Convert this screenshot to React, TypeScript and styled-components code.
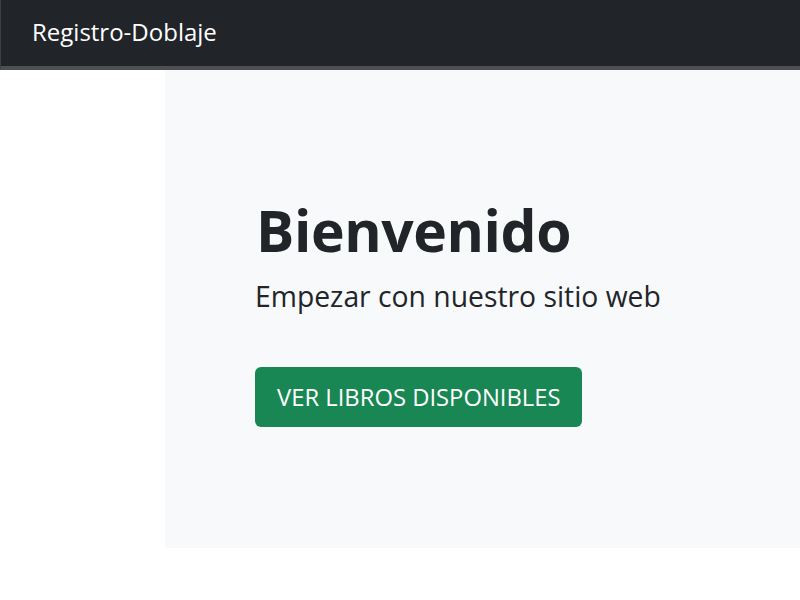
import React from "react";
import styled, { createGlobalStyle } from "styled-components";

const Global = createGlobalStyle`
  html, body { margin: 0; padding: 0; background: #fff; }
  body { font-family: "Open Sans", "Noto Sans", sans-serif; color: #212529; }
  * { box-sizing: border-box; }
`;

const Navbar = styled.nav`
  height: 70px;
  background: #212529;
  border-left: 1px solid #3b3e42;
  border-bottom: 4px solid #4d4f52;
  display: flex;
  align-items: center;
  padding-left: 31px;
  padding-bottom: 3px;
`;

const Brand = styled.a`
  color: #fff;
  font-size: 24px;
  text-decoration: none;
`;

const Main = styled.main`
  padding-left: 165px;
`;

const Jumbotron = styled.section`
  background: #f8f9fa;
  height: 478px;
  padding: 126px 0 0 90px;
`;

const Title = styled.h1`
  margin: 0 0 0 1px;
  font-size: 57px;
  font-weight: 700;
  line-height: 1.2;
  letter-spacing: -0.4px;
`;

const Lead = styled.p`
  margin: 16px 0 0;
  font-size: 28.3px;
  font-weight: 400;
  line-height: 1.2;
`;

const Button = styled.a`
  display: inline-flex;
  align-items: center;
  margin-top: 53px;
  height: 60px;
  padding: 0 21px 0 22px;
  background: #198754;
  color: #fff;
  border-radius: 6px;
  font-size: 23.8px;
  text-decoration: none;
`;

export default function App() {
  return (
    <>
      <Global />
      <Navbar>
        <Brand href="#">Registro-Doblaje</Brand>
      </Navbar>
      <Main>
        <Jumbotron>
          <Title>Bienvenido</Title>
          <Lead>Empezar con nuestro sitio web</Lead>
          <Button href="#">VER LIBROS DISPONIBLES</Button>
        </Jumbotron>
      </Main>
    </>
  );
}
